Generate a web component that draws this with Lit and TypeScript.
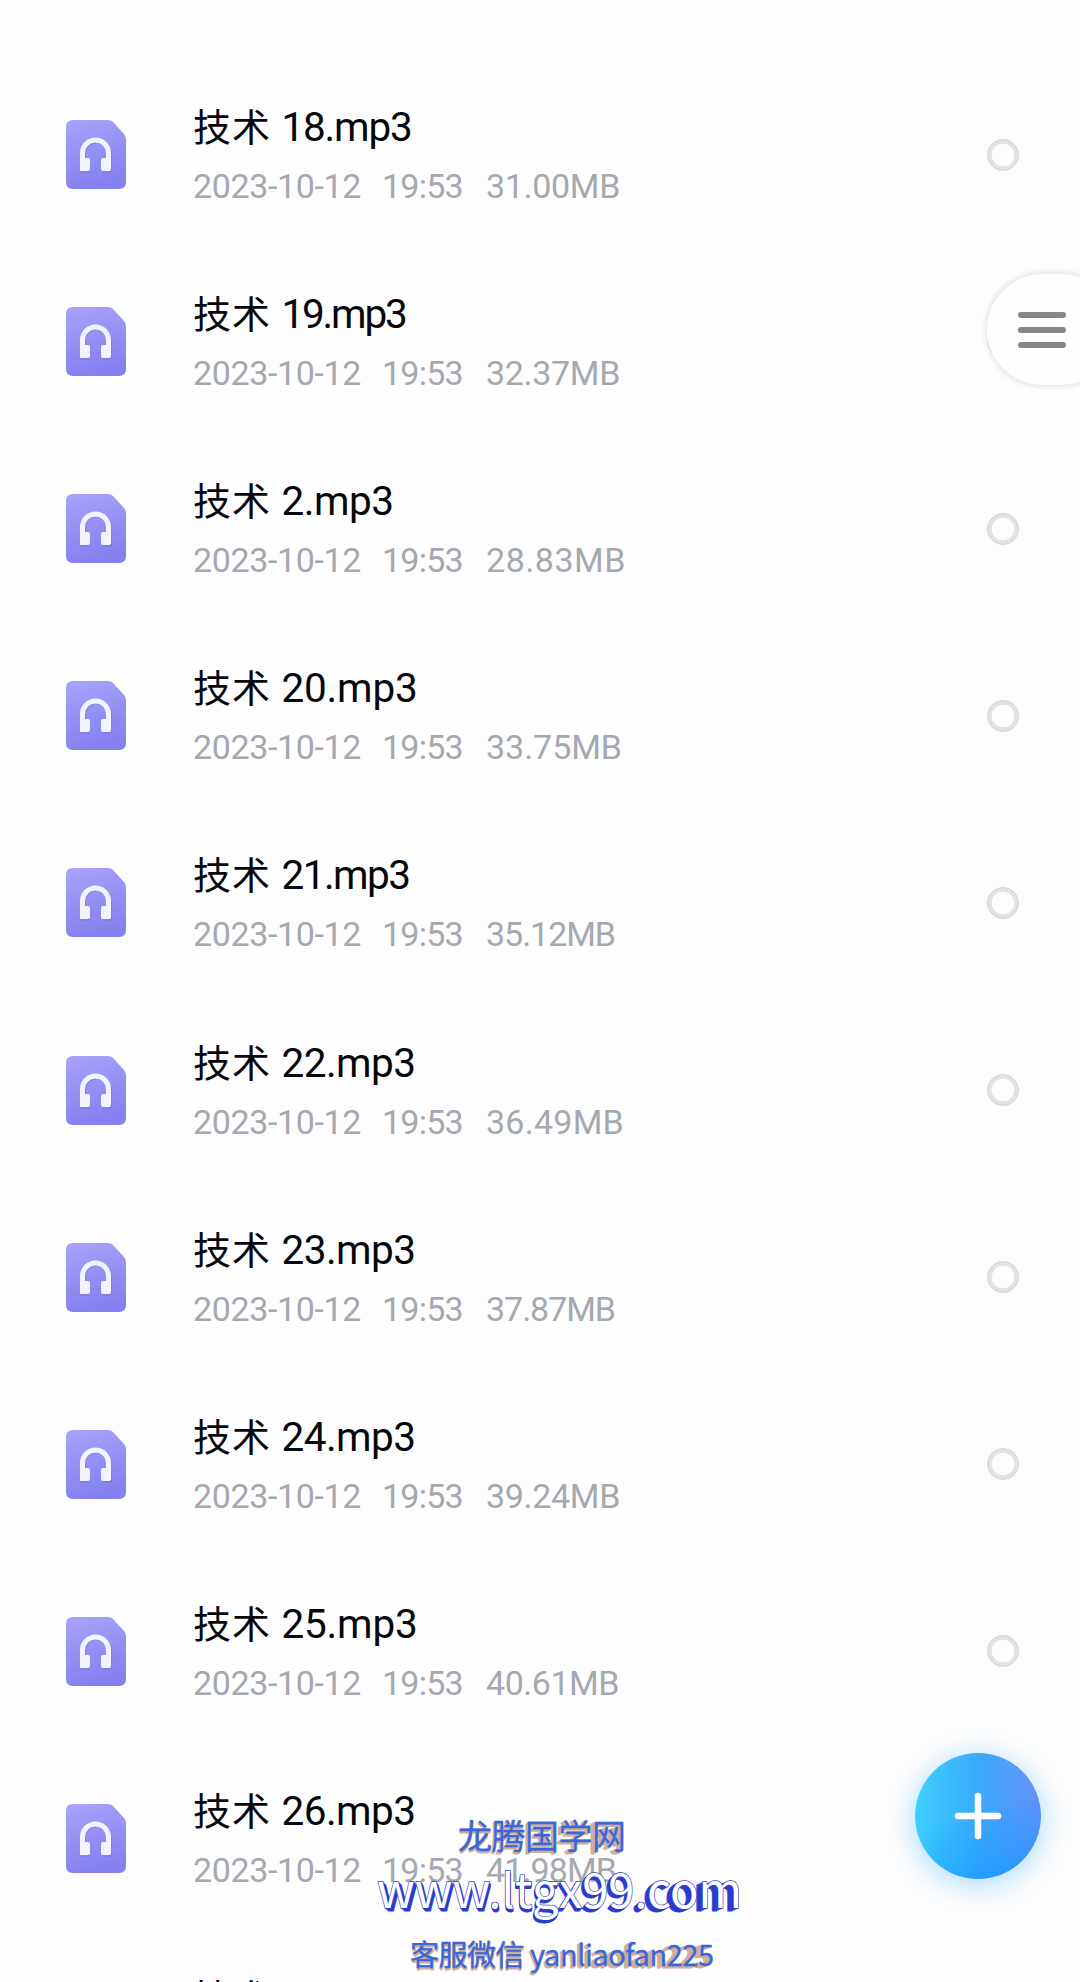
import { LitElement, html, css, svg } from "lit";
import { customElement } from "lit/decorators.js";

interface AudioFile { name: string; nameWidth: number; size: string; sizeWidth: number; }

const FILES: AudioFile[] = [
  { name: "18.mp3", nameWidth: 130, size: "31.00MB", sizeWidth: 134 },
  { name: "19.mp3", nameWidth: 124, size: "32.37MB", sizeWidth: 134 },
  { name: "2.mp3", nameWidth: 112, size: "28.83MB", sizeWidth: 140 },
  { name: "20.mp3", nameWidth: 136, size: "33.75MB", sizeWidth: 136 },
  { name: "21.mp3", nameWidth: 128, size: "35.12MB", sizeWidth: 129 },
  { name: "22.mp3", nameWidth: 134, size: "36.49MB", sizeWidth: 138 },
  { name: "23.mp3", nameWidth: 134, size: "37.87MB", sizeWidth: 129 },
  { name: "24.mp3", nameWidth: 134, size: "39.24MB", sizeWidth: 134 },
  { name: "25.mp3", nameWidth: 136, size: "40.61MB", sizeWidth: 133 },
  { name: "26.mp3", nameWidth: 134, size: "41.98MB", sizeWidth: 130 },
  { name: "27.mp3", nameWidth: 134, size: "43.35MB", sizeWidth: 134 },
];

const pen = document.createElement("canvas").getContext("2d")!;

/** Letter spacing that sets the text to the given advance width. */
function tracking(text: string, size: number, width: number): string {
  pen.font = `${size}px Roboto`;
  return `letter-spacing:${((width - pen.measureText(text).width) / text.length).toFixed(3)}px`;
}

const TITLE = 40.5;
const META = 34;

@customElement("app-root")
export class AppRoot extends LitElement {
  static styles = css`
    :host { display: block; position: relative; height: 1982px; overflow: hidden; background: #fdfdfd; font-family: Roboto, "Noto Sans CJK SC", sans-serif; }
    .list { display: flex; flex-direction: column; padding-top: 61px; }
    .row { display: grid; grid-template-columns: 60px 1fr 34px; column-gap: 67px; align-items: center; flex: none; height: 187.1px; padding: 0 60px 0 66px; box-sizing: border-box; }
    .icon { display: block; width: 60px; height: 71px; }
    .text { display: flex; flex-direction: column; white-space: nowrap; padding-top: 5px; }
    .title { display: flex; height: 58px; line-height: 57px; font-size: 40.5px; color: #06070c; }
    .cjk { width: 88.5px; margin-top: -3px; font-family: "Noto Sans CJK SC", sans-serif; font-size: 38px; letter-spacing: 1px; }
    .meta { display: flex; height: 58px; line-height: 58px; font-size: 34px; color: #a5a9af; }
    .date { width: 189px; }
    .time { width: 104px; }
    .ring { display: block; width: 34px; height: 34px; }
    .menu { position: absolute; left: 987px; top: 274px; width: 130px; height: 111px; box-sizing: border-box; padding: 37.5px 0 0 31px; border-radius: 56px; background: #fefefe; box-shadow: 0 0 5px 2px #e6e6e6; display: flex; flex-direction: column; gap: 9px; }
    .bar { width: 48px; height: 6px; border-radius: 3px; background: #878787; }
    .add { position: absolute; left: 915px; top: 1753px; width: 126px; height: 126px; border-radius: 50%; background: linear-gradient(160deg, transparent 45%, rgba(10,150,255,.6) 95%), linear-gradient(90deg, #3dd0fd 0%, #3ba8fc 52%, #698ff8 100%); box-shadow: 0 5px 26px 3px rgba(86,186,255,.42); }
    .plus { display: block; width: 126px; height: 126px; }
    .mark { position: absolute; left: 360px; top: 1800px; width: 400px; height: 182px; display: block; }
  `;

  render() {
    return html`
      <div class="list">${FILES.map((f) => this.row(f))}</div>
      <div class="menu"><div class="bar"></div><div class="bar"></div><div class="bar"></div></div>
      <div class="add">
        <svg class="plus" viewBox="0 0 126 126" stroke="#fff" stroke-width="6.500" stroke-linecap="round"><path d="M43 63H83M63 43V83" /></svg>
      </div>
      ${this.mark()}
    `;
  }

  row(f: AudioFile) {
    return html`<div class="row">
      <svg class="icon" viewBox="0 -1 60 71">
        <defs><linearGradient id="g" x1="0" y1="0" x2="0.25" y2="1"><stop offset="0" stop-color="#a9a3fa" /><stop offset="1" stop-color="#8580ef" /></linearGradient></defs>
        <path fill="url(#g)" d="M7 0H42Q45 0 47 2L58 14Q60 16 60 19V62Q60 69 53 69H7Q0 69 0 62V7Q0 0 7 0Z" />
        <path fill="#7772d8" opacity=".45" d="M15 53V34A15.500 15.500 0 0 1 46 34V53H37V40H41V34A10.500 10.500 0 0 0 20 34V40H24V53Z" />
        <path fill="#f2f3fe" d="M14 33A15.500 15.500 0 0 1 45 33V49Q45 51 43 51H37Q35 51 35 49V40Q35 38 37 38H40V33A10.500 10.500 0 0 0 19 33V38H22Q24 38 24 40V49Q24 51 22 51H14Z" />
      </svg>
      <div class="text">
        <div class="title"><span class="cjk">技术</span><span style=${tracking(f.name, TITLE, f.nameWidth)}>${f.name}</span></div>
        <div class="meta">
          <span class="date" style=${tracking("2023-10-12", META, 168)}>2023-10-12</span>
          <span class="time" style=${tracking("19:53", META, 81)}>19:53</span>
          <span style=${tracking(f.size, META, f.sizeWidth)}>${f.size}</span>
        </div>
      </div>
      <svg class="ring" viewBox="0 0 34 34" fill="none"><circle cx="17" cy="17" r="13.500" stroke="#e3e3e3" stroke-width="4.500" /><circle cx="17" cy="17" r="15.500" stroke="#d0d0d0" stroke-width=".8" /></svg>
    </div>`;
  }

  /**
   * One line of the overlay: a shade that runs from startDx at its left end
   * to endDx at its right end, then the face on top of it.
   */
  line(text: string, x: number, y: number, size: number, width: number, shade: string, face: string, edge: string, startDx: number, endDx: number, dy: number, steps: number) {
    const draw = (t: number, fill: string, stroke: string, weight: number) => svg`<text
      x=${x + startDx * t} y=${y + dy * t} font-size=${size} textLength=${width + (endDx - startDx) * t}
      fill=${fill} stroke=${stroke} stroke-width=${weight} paint-order="stroke">${text}</text>`;
    const shades = Array.from({ length: steps }, (_, i) => draw((steps - i) / steps, shade, shade, 0.8));
    return svg`<g aria-hidden="true">${shades}</g>${draw(0, face, edge, face === edge ? 0.3 : 1.3)}`;
  }

  mark() {
    return html`<svg class="mark" viewBox="0 0 400 182" font-family="'Noto Sans CJK SC', sans-serif">
      ${this.line("龙腾国学网", 98, 49, 34, 168, "#cfae9b", "#3a67d8", "#3a67d8", 0, -4, 2, 2)}
      ${this.line("www.ltgx99.com", 17, 107.5, 47, 365, "#2b3bd0", "#fff", "#2b3bd0", 3, -6, 3, 3)}
      ${this.line("客服微信 yanliaofan225", 50, 166, 29, 304, "#cfae9b", "#3a67d8", "#3a67d8", 1, -6, 2, 2)}
    </svg>`;
  }
}
